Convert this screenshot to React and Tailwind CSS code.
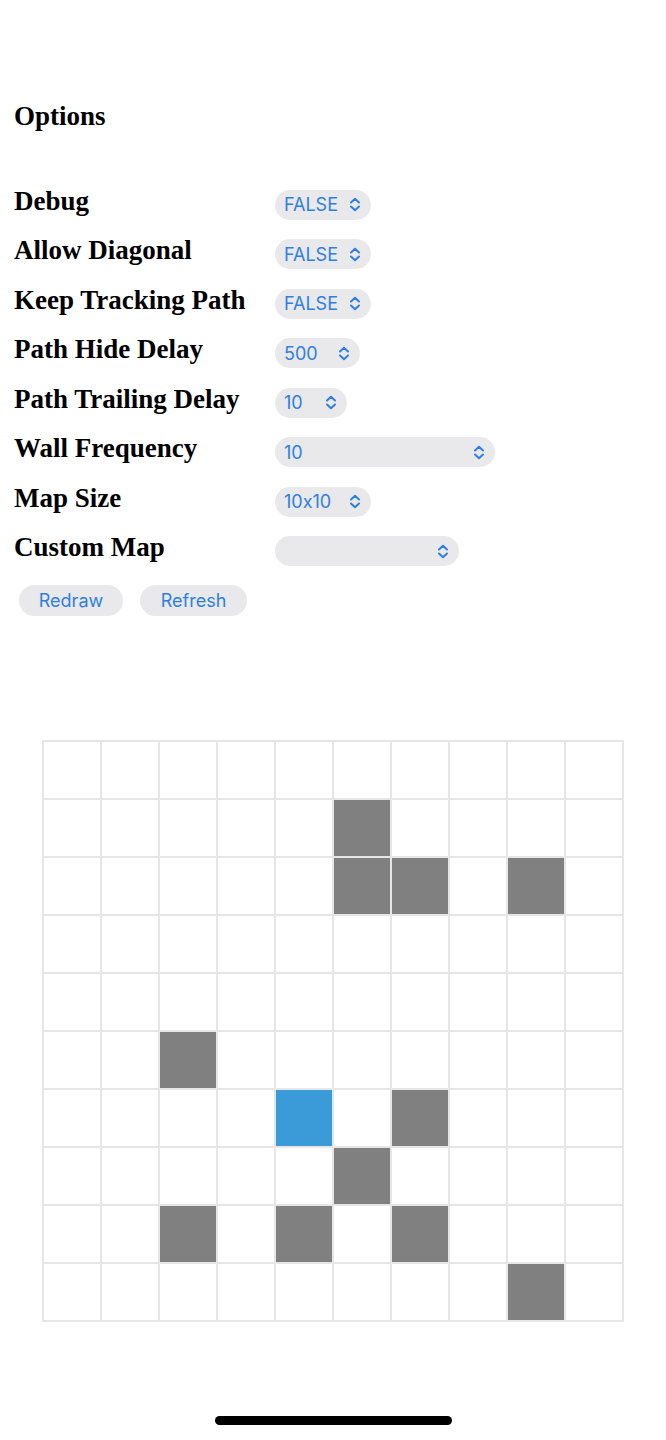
import React from "react";

const options = [
  { label: "Debug", value: "FALSE", w: "w-[96px]" },
  { label: "Allow Diagonal", value: "FALSE", w: "w-[96px]" },
  { label: "Keep Tracking Path", value: "FALSE", w: "w-[96px]" },
  { label: "Path Hide Delay", value: "500", w: "w-[85px]" },
  { label: "Path Trailing Delay", value: "10", w: "w-[72px]" },
  { label: "Wall Frequency", value: "10", w: "w-[220px]" },
  { label: "Map Size", value: "10x10", w: "w-[96px]" },
  { label: "Custom Map", value: "", w: "w-[184px]" },
];

// wall = 1, current = 2
const map = [
  [0, 0, 0, 0, 0, 0, 0, 0, 0, 0],
  [0, 0, 0, 0, 0, 1, 0, 0, 0, 0],
  [0, 0, 0, 0, 0, 1, 1, 0, 1, 0],
  [0, 0, 0, 0, 0, 0, 0, 0, 0, 0],
  [0, 0, 0, 0, 0, 0, 0, 0, 0, 0],
  [0, 0, 1, 0, 0, 0, 0, 0, 0, 0],
  [0, 0, 0, 0, 2, 0, 1, 0, 0, 0],
  [0, 0, 0, 0, 0, 1, 0, 0, 0, 0],
  [0, 0, 1, 0, 1, 0, 1, 0, 0, 0],
  [0, 0, 0, 0, 0, 0, 0, 0, 1, 0],
];

const sf = { fontFamily: "Inter, 'Liberation Sans', Arial, sans-serif", fontFeatureSettings: "'calt' 0" };
const serif = { fontFamily: "'Liberation Serif', 'Times New Roman', serif" };

function Chevron() {
  return (
    <svg width="12" height="15" viewBox="0 0 12 15" fill="none" stroke="currentColor" strokeWidth="2" strokeLinecap="round" strokeLinejoin="round">
      <path d="M2 5.5 L6 1.8 L10 5.5" />
      <path d="M2 9.5 L6 13.2 L10 9.5" />
    </svg>
  );
}

function Select({ value, w }) {
  return (
    <div
      className={`${w} h-[30px] rounded-full bg-[#e9e9eb] text-[#2f7fe0] flex items-center justify-between pl-[9px] pr-[10px] text-[18px]`}
      style={sf}
    >
      <span>{value}</span>
      <Chevron />
    </div>
  );
}

export default function App() {
  return (
    <div className="w-[666px] h-[1440px] bg-white relative">
      <div className="pt-[99px] pl-[14px]">
        <h2 className="text-[27px] font-bold leading-[34px] text-black" style={serif}>
          Options
        </h2>

        <div className="mt-[47px]">
          {options.map((o) => (
            <div key={o.label} className="flex items-center h-[49.5px]">
              <div className="w-[261px] text-[27px] font-bold text-black -mt-[8px]" style={serif}>
                {o.label}
              </div>
              <Select value={o.value} w={o.w} />
            </div>
          ))}
        </div>

        <div className="flex gap-[17px] pl-[5px] mt-[9px]" style={sf}>
          <button className="w-[104px] h-[31px] rounded-full bg-[#e9e9eb] text-[#2f7fe0] text-[18px]">Redraw</button>
          <button className="w-[107px] h-[31px] rounded-full bg-[#e9e9eb] text-[#2f7fe0] text-[18px]">Refresh</button>
        </div>
      </div>

      <div className="ml-[42px] mt-[124px] w-[582px] border-l-2 border-t-2 border-[#e6e6e6] grid grid-cols-10">
        {map.flat().map((c, i) => (
          <div
            key={i}
            className={`h-[58px] border-r-2 border-b-2 border-[#e6e6e6] ${c === 1 ? "bg-[#808080]" : c === 2 ? "bg-[#3a9bd8]" : "bg-white"}`}
          />
        ))}
      </div>

      <div className="absolute left-[215px] top-[1416px] w-[237px] h-[9px] rounded-full bg-black" />
    </div>
  );
}
